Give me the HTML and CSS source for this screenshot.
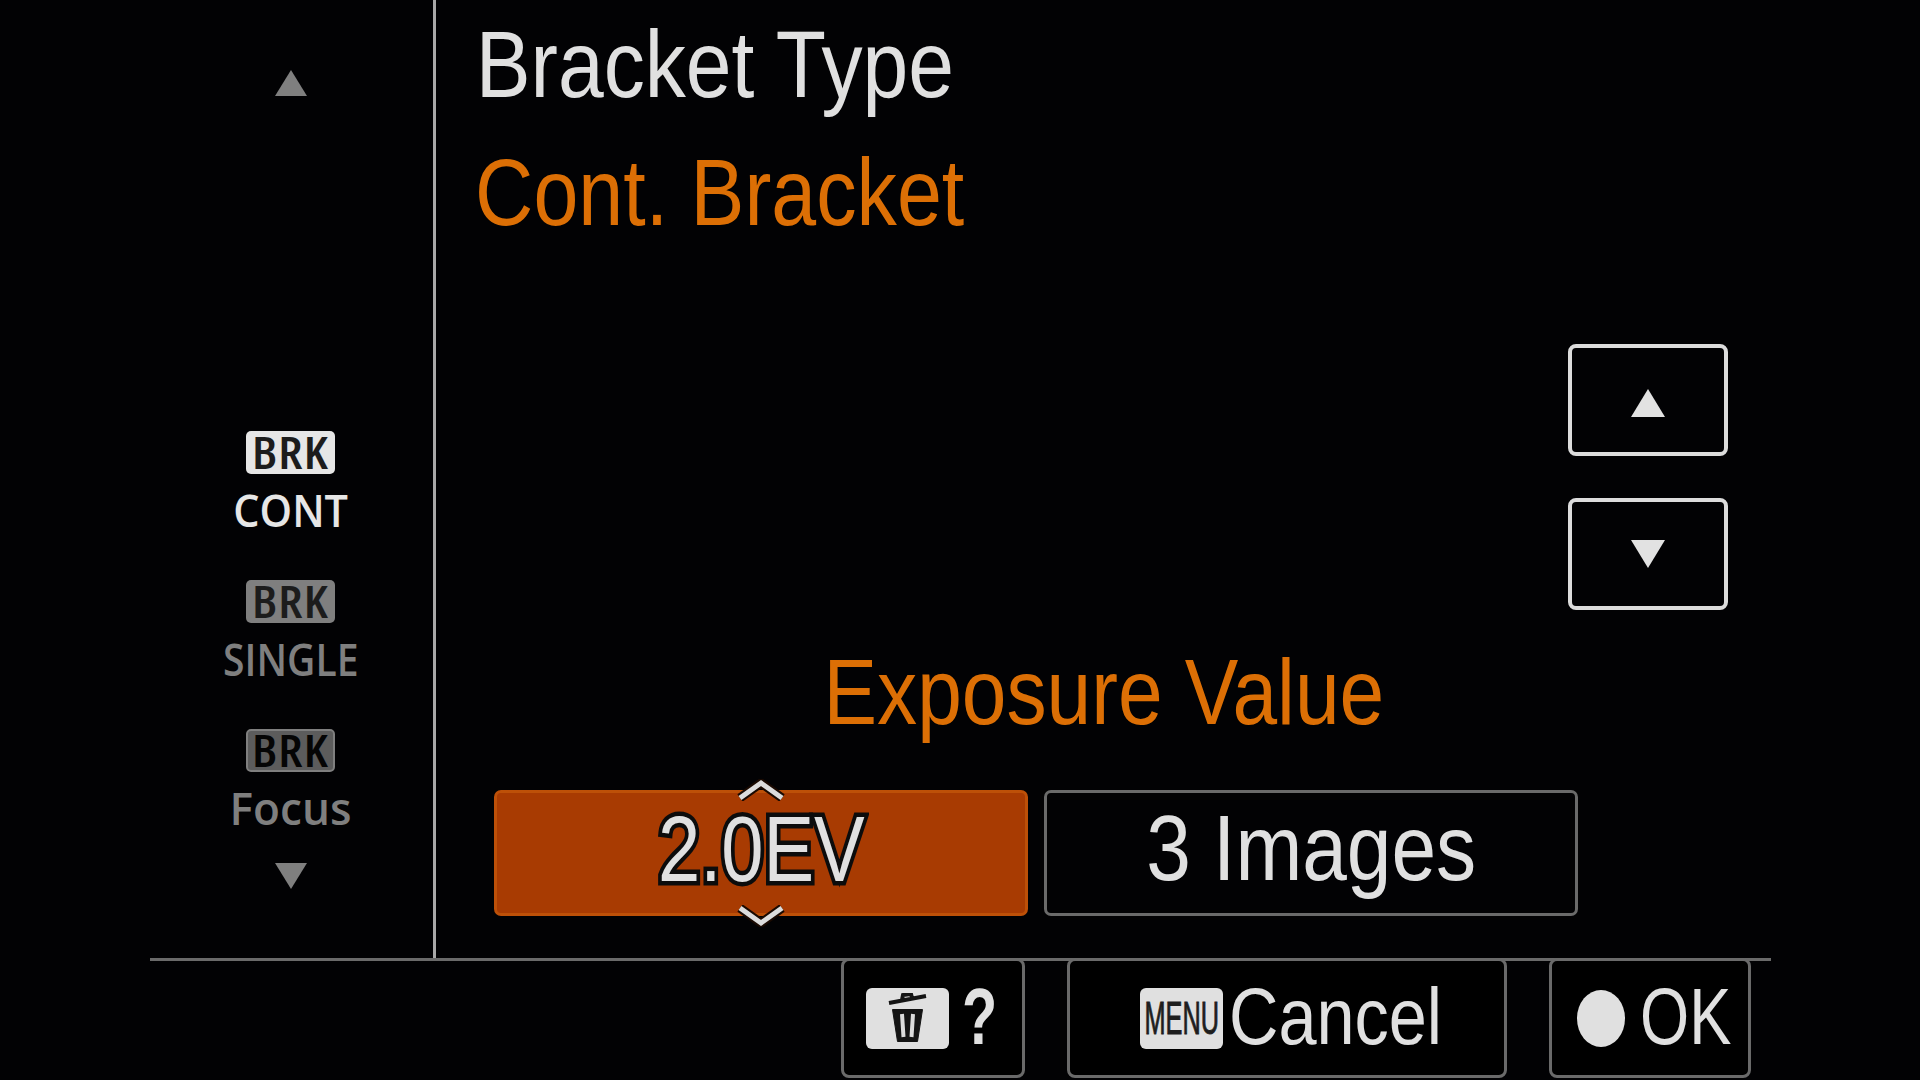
FILE: index.html
```html
<!DOCTYPE html>
<html lang="en">
<head>
<meta charset="utf-8">
<title>Bracket Type</title>
<link rel="stylesheet" href="styles.css">
</head>
<body>
<div class="screen">
  <div class="upper">
    <nav class="side">
      <svg class="tri tri-up" viewBox="0 0 32 26"><polygon points="16,0 32,26 0,26"/></svg>
      <div class="item item-on item-first"><span class="badge"><span class="badge-word">BRK</span></span><span class="label label-cont">CONT</span></div>
      <div class="item"><span class="badge"><span class="badge-word">BRK</span></span><span class="label label-single">SINGLE</span></div>
      <div class="item"><span class="badge badge-dark"><span class="badge-word">BRK</span></span><span class="label label-focus">Focus</span></div>
      <svg class="tri" viewBox="0 0 32 26"><polygon points="0,0 32,0 16,26"/></svg>
    </nav>
    <main class="main">
      <div class="title title-type">Bracket Type</div>
      <div class="title title-on">Cont. Bracket</div>
      <div class="steppers">
        <div class="step"><svg class="step-up" viewBox="0 0 34 28"><polygon points="17,0 34,28 0,28"/></svg></div>
        <div class="step"><svg class="step-down" viewBox="0 0 34 28"><polygon points="0,0 34,0 17,28"/></svg></div>
      </div>
      <div class="field-name">Exposure Value</div>
      <div class="values">
        <div class="value value-on">
          <svg class="chev chev-up" viewBox="0 0 50 22"><path class="chev-edge" d="M4 19 L25 4 L46 19"/><path class="chev-line" d="M4 19 L25 4 L46 19"/></svg>
          <span class="outlined">2.0EV</span>
          <svg class="chev chev-down" viewBox="0 0 50 22"><path class="chev-edge" d="M4 3 L25 18 L46 3"/><path class="chev-line" d="M4 3 L25 18 L46 3"/></svg>
        </div>
        <div class="value"><span class="plain">3 Images</span></div>
      </div>
    </main>
  </div>
  <footer class="lower">
    <div class="btn btn-help">
      <span class="key">
        <svg class="trash" viewBox="0 0 40 50"><path class="lid" d="M1 10 L38 3 M14 7 L15 2 L23 1 L24 5"/><path class="can" d="M4.5 16.5 H34.5 L29.5 48.5 H9.5 Z"/><path class="ribs" d="M14 21 L15.5 44 M25 21 L23.5 44"/></svg>
      </span>
      <span class="btn-text text-help">?</span>
    </div>
    <div class="btn btn-cancel">
      <span class="key"><span class="menu-word">MENU</span></span>
      <span class="btn-text text-cancel">Cancel</span>
    </div>
    <div class="btn btn-ok">
      <span class="dot"></span>
      <span class="btn-text text-ok">OK</span>
    </div>
  </footer>
</div>
</body>
</html>
```
FILE: styles.css
```css
html, body { margin: 0; padding: 0; background: #000; }
.screen {
  width: 1920px; height: 1080px; overflow: hidden;
  display: flex; flex-direction: column;
  background: #020204;
  font-family: "Liberation Sans", Arial, sans-serif;
  color: #e0e0e0;
}
.upper { display: flex; height: 958px; margin: 0 149px 0 150px; }

.side {
  width: 281px; padding-right: 2px; flex: none;
  border-right: 3px solid #a8a8a8;
  display: flex; flex-direction: column; align-items: center;
  font-family: "Open Sans", sans-serif;
  color: #7f7f7f;
}
.tri { fill: #7f7f7f; display: block; width: 32px; height: 26px; flex: none; }
.tri-up { margin-top: 70px; }
.item { display: flex; flex-direction: column; align-items: center; height: 134px; flex: none; }
.item + .item { margin-top: 15px; }
.item-first { margin-top: 335px; }
.item-on { color: #e6e6e6; }
.badge {
  width: 89px; height: 43px; box-sizing: border-box;
  border-radius: 5px; background: currentColor;
  display: flex; align-items: center; justify-content: center;
}
.badge-dark { background: #5c5c5c; border: 2px solid #7f7f7f; }
.badge-word {
  color: #1c1c1c; font-size: 45px; line-height: 41px; padding-bottom: 2px;
  font-stretch: 75%; font-weight: 600; letter-spacing: 1px;
  transform: scaleX(1.12);
}
.badge-dark .badge-word { color: #050505; }
.label { font-size: 46px; line-height: 40px; margin-top: 15px; font-stretch: 90%; font-weight: 600; white-space: nowrap; }
.label-cont { transform: scaleX(.9); }
.label-single { transform: scaleX(.85); }
.label-focus { transform: scaleX(.96); }

.main { flex: 1; display: flex; flex-direction: column; min-width: 0; }
.title {
  font-size: 95px; line-height: 128px; height: 128px; flex: none;
  padding-left: 46px; white-space: nowrap;
  transform-origin: 0 50%;
}
.title-type { transform: scaleX(.865); }
.title-on { color: #dc6f05; transform: scaleX(.85); }
.steppers { display: flex; flex-direction: column; gap: 42px; align-self: flex-end; margin: 88px 43px 0 0; }
.step {
  width: 160px; height: 112px; box-sizing: border-box;
  border: 4px solid #dcdcdc; border-radius: 8px;
  display: flex; align-items: center; justify-content: center;
}
.step svg { width: 34px; height: 28px; fill: #e2e2e2; }
.step-up { margin-top: 6px; }
.field-name {
  font-size: 93px; line-height: 100px; color: #dc6f05;
  padding-left: 449px; margin-top: 32px; white-space: nowrap;
  transform: scaleX(.863); transform-origin: 0 50%;
}
.values { display: flex; gap: 16px; padding-left: 58px; margin-top: 48px; }
.value {
  width: 534px; height: 126px; box-sizing: border-box; position: relative;
  border: 3px solid #6a6a6a; border-radius: 7px;
  display: flex; align-items: center; justify-content: center;
  font-size: 92px;
}
.value-on { background: #a83b02; border-color: #bd5008; }
.outlined {
  display: inline-block; white-space: nowrap; padding-bottom: 7px;
  -webkit-text-stroke: 9px #0c0c0c; paint-order: stroke fill;
  transform: scaleX(.825);
}
.plain { display: inline-block; white-space: nowrap; padding-bottom: 10px; transform: scaleX(.872); }
.chev { position: absolute; left: 50%; margin-left: -25px; width: 50px; height: 22px; fill: none; }
.chev-up { top: -14px; }
.chev-down { bottom: -14px; }
.chev-edge { stroke: #1a0a02; stroke-width: 9px; }
.chev-line { stroke: #dcdcdc; stroke-width: 5px; }

.lower {
  flex: 1; margin: 0 149px 0 150px; box-sizing: border-box;
  border-top: 3px solid #6a6a6a;
  display: flex; justify-content: flex-end; align-items: flex-start;
  gap: 42px; padding-right: 20px;
}
.btn {
  height: 120px; box-sizing: border-box; margin-top: -3px;
  border: 3px solid #6a6a6a; border-radius: 8px;
  display: flex; align-items: center;
  background: #000;
}
.btn-help { width: 184px; padding-left: 22px; gap: 13px; }
.btn-cancel { width: 440px; padding-left: 70px; gap: 6px; }
.btn-ok { width: 202px; padding-left: 25px; gap: 15px; }
.btn-text {
  font-size: 80px; line-height: 90px; white-space: nowrap; display: block;
  padding-bottom: 3px; transform-origin: 0 50%;
}
.text-help { transform: scaleX(.72); font-weight: 700; }
.text-cancel { transform: scaleX(.855); }
.text-ok { transform: scaleX(.79); }
.key {
  width: 83px; height: 61px; border-radius: 6px; background: #e0e0e0;
  display: flex; align-items: center; justify-content: center; flex: none;
}
.trash { width: 40px; height: 50px; }
.lid { fill: none; stroke: #141414; stroke-width: 4px; }
.can { fill: #141414; stroke: #141414; stroke-width: 1px; }
.ribs { fill: none; stroke: #dcdcdc; stroke-width: 4px; }
.menu-word {
  color: #1e1e1e; font-size: 46px; line-height: 61px; white-space: nowrap;
  -webkit-text-stroke: 1px #1e1e1e;
  transform: scaleX(.55);
}
.dot { width: 48px; height: 57px; border-radius: 50%; background: #e0e0e0; flex: none; }
```
